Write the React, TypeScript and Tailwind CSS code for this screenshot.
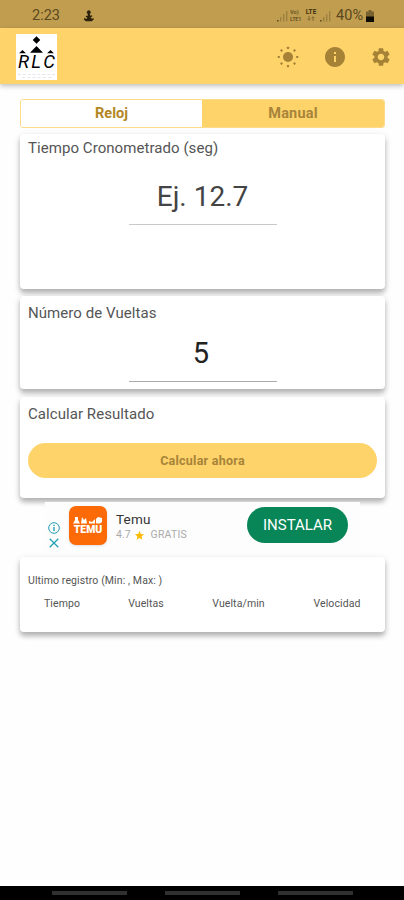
import { type ReactNode } from 'react'
import { MdInfo, MdSettings, MdStar } from 'react-icons/md'

const COLUMNS = ['Tiempo', 'Vueltas', 'Vuelta/min', 'Velocidad']

function SunIcon() {
  return (
    <svg viewBox="0 0 24 24" fill="currentColor" className="w-6 h-6 -ml-px">
      <circle cx="12" cy="12" r="5" />
      {[0, 45, 90, 135, 180, 225, 270, 315].map(angle => (
        <rect key={angle} x="10.9" y="1.7" width="2.2" height="2.2" rx="0.5" transform={`rotate(${angle} 12 12)`} />
      ))}
    </svg>
  )
}

function NotificationIcon() {
  return (
    <svg viewBox="0 0 12 14" className="w-3 h-3.5 text-[#2b210c]" fill="currentColor">
      <circle cx="5.8" cy="3.2" r="1.9" />
      <path d="M4.8 4.5h2l.4 2.3 1.6-.6.6 1-2 1.4 1.8 1.2 1.2-.8.4 1.2-2 2H3L.8 10.5 1.4 9l2 .9 1-1.3L2.6 8l.6-1.2 1.4.2z" />
    </svg>
  )
}

function SignalIcon() {
  return (
    <svg viewBox="0 0 12 12" className="w-3 h-3" fill="currentColor">
      <path d="M0 10h1.6v1.5H0z" />
      <path opacity="0.45" d="M3.3 7h1v4.5h-1zM6.3 4h1v7.5h-1zM9.3 1h1v10.5h-1z" />
    </svg>
  )
}

function BatteryIcon() {
  return (
    <svg viewBox="0 0 8 12" className="w-2 h-3">
      <path fill="#7a6230" d="M2.5 0h3v1.5H8V7H0V1.5h2.5z" />
      <path fill="#0d0a03" d="M0 6.5h8V12H0z" />
    </svg>
  )
}

function Logo() {
  return (
    <div className="mt-px w-[41px] h-[46px] bg-white flex flex-col items-center overflow-hidden text-black">
      <svg viewBox="0 0 41 20" className="w-[41px] h-5 shrink-0" fill="currentColor">
        <path d="M20.5 2.2 24.3 6l-3.8 3.8L16.7 6zM20.5 12l6.5 6.8H14zM6.5 16l3.4 3.2H3.1zM34.5 16l3.4 3.2h-6.8z" />
      </svg>
      <div className="w-full flex justify-between px-[2px] text-[18.5px] leading-[17px] italic">
        <span>R</span>
        <span>L</span>
        <span>C</span>
      </div>
      <div className="mt-[3px] w-[37px] border-t border-dashed border-gray-200" />
      <div className="mt-[2px] w-[29px] border-t border-dashed border-gray-200" />
    </div>
  )
}

function StatusBar() {
  return (
    <div className="h-7 bg-[#c09d4f] flex items-center justify-between pl-8 pr-[30px] pt-[3px] text-[#5b4820]">
      <div className="flex items-center">
        <span className="w-[51px] text-[14.5px]">2:23</span>
        <NotificationIcon />
      </div>
      <div className="flex items-center">
        <SignalIcon />
        <div className="ml-px w-[13px] text-[5.5px] leading-[7px] font-medium">
          <div>Vo)</div>
          <div className="tracking-[-0.2px]">LTE1</div>
        </div>
        <div className="ml-0.5 mr-[3px] w-3 -mt-0.5 flex flex-col items-center text-[#3f3010]">
          <span className="text-[6.5px] leading-[8px] font-bold">LTE</span>
          <svg viewBox="0 0 8 5" className="w-2 h-[5px] text-[#7a6230]" fill="none" stroke="currentColor" strokeWidth={0.9}>
            <path d="M2 0v4M.5 2.7 2 4.3l1.5-1.6M6 5V1M4.5 2.3 6 .7l1.5 1.6" />
          </svg>
        </div>
        <SignalIcon />
        <span className="ml-1 mr-[3px] text-[14.5px]">40%</span>
        <BatteryIcon />
      </div>
    </div>
  )
}

function Card({ className, children }: { className: string; children: ReactNode }) {
  return (
    <section className={`mx-5 mr-[19px] px-2 bg-white rounded shadow-[0_4px_5px_rgba(0,0,0,0.25),0_2px_8px_rgba(0,0,0,0.1)] ${className}`}>
      {children}
    </section>
  )
}

function CardTitle({ children }: { children: ReactNode }) {
  return <h2 className="text-[15px] leading-5 tracking-[0.06px]">{children}</h2>
}

function AdBanner() {
  return (
    <div className="relative mt-1 ml-[45px] w-[315px] h-[51px] bg-[#fdfdfd] flex">
      <div className="w-6 pt-5 flex flex-col items-center gap-[3px] text-[#20a0b4] pr-1.5">
        <svg viewBox="0 0 12 12" className="w-3 h-3" fill="none" stroke="currentColor" strokeWidth={1}>
          <circle cx="6" cy="6" r="5.3" />
          <path strokeWidth={1.4} d="M6 5v4M6 2.7v1.2" />
        </svg>
        <svg viewBox="0 0 12 12" className="w-3 h-3" fill="none" stroke="currentColor" strokeWidth={1.3}>
          <path d="m1.7 1.7 8.6 8.6M10.3 1.7l-8.6 8.6" />
        </svg>
      </div>
      <div className="mt-1 w-[38px] h-[39px] rounded-[7px] bg-[#fb6a07] text-white flex flex-col items-center shadow-sm">
        <svg viewBox="0 0 30 7" className="mt-[11px] w-[30px] h-[7px]" fill="currentColor">
          <path d="M2 0h3v3l2 3.5H0L2 3zM9 0l2 3 2-2 1 5.5H8zM16 4l3 1 3-3v4.5h-6zM23 2l2-2 4 1v4l-2 1.5h-4z" />
        </svg>
        <span className="mt-px text-[10.5px] leading-[10px] font-black">TEMU</span>
      </div>
      <div className="ml-[9px] pt-[9px] flex-1">
        <div className="text-[13.5px] leading-4 tracking-[0.2px] text-[#333]">Temu</div>
        <div className="flex items-center text-[10.5px] leading-4 text-[#aaa]">
          <span>4.7</span>
          <MdStar className="ml-[3px] mr-[6px] w-[11px] h-[11px] text-[#fbbc05]" />
          <span className="tracking-[0.2px]">GRATIS</span>
        </div>
      </div>
      <button className="mt-[5px] mr-3 w-[101px] h-9 rounded-full bg-[#088658] text-white text-[15px]">INSTALAR</button>
    </div>
  )
}

export default function App() {
  return (
    <div className="w-[404px] h-[900px] flex flex-col bg-[#fefefe] overflow-hidden font-[Roboto,sans-serif] text-[#555]">
      <StatusBar />
      <header className="h-14 shrink-0 bg-[#fed36a] shadow-[0_2px_5px_rgba(0,0,0,0.25)] flex items-center justify-between pl-4 pr-3">
        <Logo />
        <div className="mt-px flex items-center gap-[23px] text-[#a58236]">
          <SunIcon />
          <MdInfo className="w-6 h-6" />
          <MdSettings className="w-[22px] h-[22px]" />
        </div>
      </header>

      <div className="mt-[15px] ml-5 mr-[19px] h-[29px] shrink-0 flex rounded-[3px] overflow-hidden border border-[#fddb8b] text-[14.5px] font-bold">
        <button className="w-[181px] bg-white text-[#b38623]">Reloj</button>
        <button className="flex-1 bg-[#fed36a] text-[#a78439] tracking-[0.2px]">Manual</button>
      </div>

      <Card className="mt-[6px] h-[155px] shrink-0 pt-1">
        <CardTitle>Tiempo Cronometrado (seg)</CardTitle>
        <div className="mx-auto mt-[21px] w-[148px] h-[46px] border-b border-[#c9c9c9] text-center text-[28px] leading-[35px] text-[#444]">Ej. 12.7</div>
      </Card>

      <Card className="mt-[7px] h-[93px] shrink-0 pt-[7px]">
        <CardTitle>Número de Vueltas</CardTitle>
        <div className="mx-auto mt-[13px] w-[148px] h-[46px] border-b border-[#aaa] pr-[3px] text-center text-[29px] leading-[35px] text-[#222]">5</div>
      </Card>

      <Card className="mt-2 h-[101px] shrink-0 pt-[7px]">
        <CardTitle>Calcular Resultado</CardTitle>
        <button className="mt-[19px] w-full h-[35px] rounded-full bg-[#fed36a] pt-px text-[#a78439] text-[12.5px] font-bold tracking-[0.25px]">
          Calcular ahora
        </button>
      </Card>

      <AdBanner />

      <Card className="mt-1 h-[75px] shrink-0 pt-4 text-[10.5px]">
        <p className="leading-4 tracking-[0.1px]">Ultimo registro (Min: , Max: )</p>
        <div className="mt-[7px] grid grid-cols-[68px_100px_85px_112px] text-center leading-4 tracking-[0.1px]">
          {COLUMNS.map(column => (
            <span key={column}>{column}</span>
          ))}
        </div>
      </Card>

      <nav className="mt-auto h-3.5 shrink-0 bg-black flex justify-center gap-[38px] pt-[5px]">
        <span className="w-[75px] h-1 bg-[#303030]" />
        <span className="w-[75px] h-1 bg-[#303030]" />
        <span className="w-[75px] h-1 bg-[#303030]" />
      </nav>
    </div>
  )
}
